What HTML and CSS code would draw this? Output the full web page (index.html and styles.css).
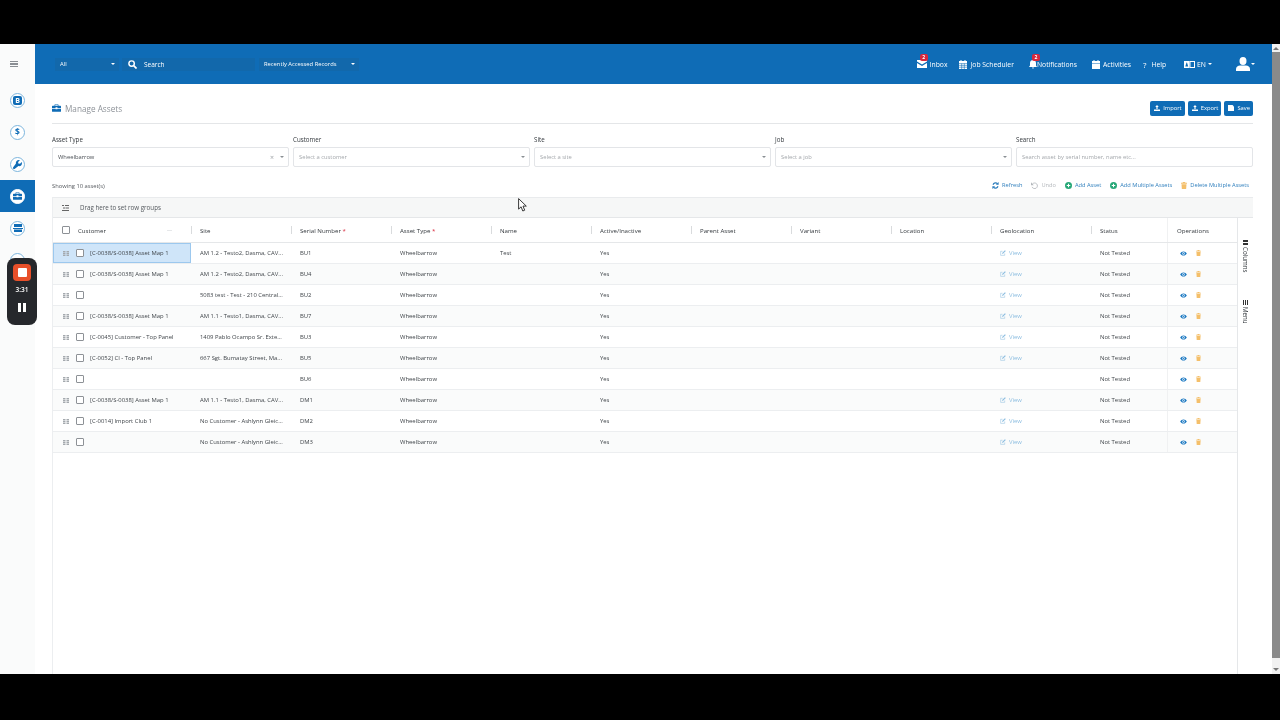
FILE: index.html
```html
<!DOCTYPE html>
<html lang="en">
<head>
<meta charset="utf-8">
<title>Manage Assets</title>
<link rel="stylesheet" href="styles.css">
</head>
<body>
<svg class="defs" width="0" height="0">
  <symbol id="i-eye" viewBox="0 0 16 12"><path fill="currentColor" d="M8 1C4.500 1 1.700 3.200 0 6c1.700 2.800 4.500 5 8 5s6.300-2.200 8-5c-1.700-2.800-4.500-5-8-5zm0 8a3 3 0 1 1 0-6 3 3 0 0 1 0 6z"/><circle cx="8" cy="6" r="1.500" fill="currentColor"/></symbol>
  <symbol id="i-trash" viewBox="0 0 12 14"><path fill="currentColor" d="M4 0h4l1 1.500h3V3.500H0V1.500h3zM1 4.500h10L10.300 14H1.700z"/></symbol>
  <symbol id="i-edit" viewBox="0 0 14 14"><path fill="none" stroke="currentColor" stroke-width="1.200" d="M11 8v4.500H1.500V3H6"/><path fill="currentColor" d="M5 7l6.500-6.500 2 2L7 9H5z"/></symbol>
  <symbol id="i-plus" viewBox="0 0 14 14"><circle cx="7" cy="7" r="7" fill="currentColor"/><path stroke="#fff" stroke-width="2" d="M3.500 7h7M7 3.500v7"/></symbol>
  <symbol id="i-grip" viewBox="0 0 6 5"><path fill="#a4a9ae" d="M0 0h2.500v1.500H0zM3.500 0H6v1.500H3.500zM0 2h2.500v1.200H0zM3.500 2H6v1.200H3.500zM0 3.700h2.500V5H0zM3.500 3.700H6V5H3.500z"/></symbol>
  <symbol id="i-case" viewBox="0 0 14 12"><path fill="currentColor" d="M5 0h4a1 1 0 0 1 1 1v1.500h3a1 1 0 0 1 1 1V6H8.500V5h-3v1H0V3.500a1 1 0 0 1 1-1h3V1a1 1 0 0 1 1-1zm0 1v1.500h4V1zM0 7h5.500v1h3V7H14v4a1 1 0 0 1-1 1H1a1 1 0 0 1-1-1z"/></symbol>
  <symbol id="i-up" viewBox="0 0 12 12"><path fill="currentColor" d="M6 0l3.500 4H7.200v4H4.800V4H2.500zM0 9h12v3H0z"/></symbol>
</svg>

<div class="frame">
  <aside class="rail">
    <button class="rail-menu" aria-label="Menu"><span></span><span></span><span></span></button>
    <div class="rail-item"><span class="rail-ring"><svg width="9" height="9" viewBox="0 0 9 9"><rect width="9" height="9" rx="2" fill="#0f6cb6"/><text x="4.500" y="7.200" class="rail-letter">B</text></svg></span></div>
    <div class="rail-item"><span class="rail-ring rail-dollar">$</span></div>
    <div class="rail-item"><span class="rail-ring"><svg width="9" height="9" viewBox="0 0 10 10"><path fill="#0f6cb6" d="M9.700 2.300L7.800 4.200 5.900 3.900 5.700 2.100 7.600.3C6.300-.2 4.900.1 4 1c-.8.800-1 2-.7 3L.4 7.900c-.5.500-.5 1.200 0 1.700s1.200.5 1.700 0L6 6.700c1 .3 2.200.1 3-.7.900-.9 1.200-2.400.7-3.700z"/></svg></span></div>
    <div class="rail-item rail-active"><span class="rail-ring rail-ring-solid"><svg width="9" height="8" class="ic-blue"><use href="#i-case"/></svg></span></div>
    <div class="rail-item"><span class="rail-ring"><svg width="10" height="8" viewBox="0 0 10 8"><path fill="#0f6cb6" d="M1 0h8v3H1zM0 4h10v1H0zM1 5.500h8V8H1z"/></svg></span></div>
    <div class="rail-item"><span class="rail-ring"></span></div>
    <div class="rail-item"><span class="rail-ring"></span></div>
  </aside>

  <div class="app">
    <header class="topbar">
      <div class="top-left">
        <div class="top-select top-all"><span>All</span><i class="caret caret-w"></i></div>
        <div class="top-search">
          <svg width="9" height="9" viewBox="0 0 10 10"><circle cx="4" cy="4" r="3" fill="none" stroke="#fff" stroke-width="1.600"/><path stroke="#fff" stroke-width="1.800" d="M6.300 6.300L9.500 9.500"/></svg>
          <span>Search</span>
        </div>
        <div class="top-select top-recent"><span>Recently Accessed Records</span><i class="caret caret-w"></i></div>
      </div>
      <nav class="top-nav">
        <a class="nav-link nav-inbox"><span class="nav-ic"><svg width="10" height="8" viewBox="0 0 10 8"><path fill="#fff" d="M0 0h10v1.500L5 4.500 0 1.500zM0 3l5 3 5-3v5H0z"/></svg><b class="badge">2</b></span>Inbox</a>
        <a class="nav-link nav-job"><svg width="8" height="9" viewBox="0 0 8 9"><path fill="#fff" d="M0 1h8v2H0zM1.500 0h1v1h-1zM5.500 0h1v1h-1zM0 3.500h8V9H0z"/><path stroke="#0f6cb6" stroke-width=".6" d="M0 5.300h8M0 7.200h8M2.700 3.500V9M5.300 3.500V9"/></svg>Job Scheduler</a>
        <a class="nav-link nav-notify"><span class="nav-ic"><svg width="8" height="9" viewBox="0 0 8 9"><path fill="#fff" d="M4 0c1.700 0 3 1.300 3 3v2.500L8 7H0l1-1.500V3c0-1.700 1.300-3 3-3zM3 7.500h2L4 9z"/></svg><b class="badge">2</b></span>Notifications</a>
        <a class="nav-link nav-act"><svg width="8" height="9" viewBox="0 0 8 9"><path fill="#fff" d="M0 1h8v2H0zM1.500 0h1v1h-1zM5.500 0h1v1h-1zM0 3.600h8V9H0z"/></svg>Activities</a>
        <a class="nav-link nav-help"><span class="nav-q">?</span>Help</a>
        <a class="nav-link nav-lang"><svg width="11" height="7" viewBox="0 0 11 7"><rect width="5.500" height="7" fill="#fff"/><rect x="6" y=".5" width="4.500" height="6" fill="none" stroke="#fff"/><path fill="#0f6cb6" d="M1.300 5.500L2.500 1.500h.5l1.200 4z"/></svg>EN<i class="caret caret-w"></i></a>
        <a class="nav-user"><svg width="14" height="14" viewBox="0 0 14 14"><ellipse cx="7" cy="4" rx="3.500" ry="4" fill="#fff"/><path fill="#fff" d="M0 14v-2c0-2 2-3.500 4-3.500h6c2 0 4 1.500 4 3.500v2z"/></svg><i class="caret caret-w"></i></a>
      </nav>
    </header>

    <main class="content">
      <div class="page-head">
        <h1 class="page-title"><svg width="9" height="8" class="ic-blue"><use href="#i-case"/></svg>Manage Assets</h1>
        <div class="head-btns">
          <button class="btn"><svg width="6" height="6"><use href="#i-up"/></svg>Import</button>
          <button class="btn"><svg width="6" height="6"><use href="#i-up"/></svg>Export</button>
          <button class="btn btn-save"><svg width="6" height="6" viewBox="0 0 6 6"><path fill="currentColor" d="M0 0h4.500L6 1.500V6H0z"/></svg>Save</button>
        </div>
      </div>

      <div class="filters">
        <label class="filter"><span class="filter-label">Asset Type</span><span class="field"><span class="val">Wheelbarrow</span><span class="clear">×</span><i class="caret"></i></span></label>
        <label class="filter"><span class="filter-label">Customer</span><span class="field"><span class="ph">Select a customer</span><i class="caret"></i></span></label>
        <label class="filter"><span class="filter-label">Site</span><span class="field"><span class="ph">Select a site</span><i class="caret"></i></span></label>
        <label class="filter"><span class="filter-label">Job</span><span class="field"><span class="ph">Select a job</span><i class="caret"></i></span></label>
        <label class="filter"><span class="filter-label">Search</span><span class="field"><span class="ph">Search asset by serial number, name etc...</span></span></label>
      </div>

      <div class="toolbar">
        <span class="count">Showing 10 asset(s)</span>
        <div class="actions">
          <a class="act act-blue"><svg width="7" height="7" viewBox="0 0 10 10"><path fill="none" stroke="currentColor" stroke-width="1.800" d="M1.500 4A3.700 3.700 0 0 1 8 2.800M8.500 6A3.700 3.700 0 0 1 2 7.200"/><path fill="currentColor" d="M9.500 0v4h-4zM.5 10V6h4z"/></svg>Refresh</a>
          <a class="act act-muted"><svg width="7" height="7" viewBox="0 0 10 10"><path fill="none" stroke="currentColor" stroke-width="1.200" d="M2 3a4 4 0 1 1-.5 4"/><path fill="currentColor" d="M0 .5v4h4z"/></svg>Undo</a>
          <a class="act act-blue"><svg width="7" height="7" class="ic-green"><use href="#i-plus"/></svg>Add Asset</a>
          <a class="act act-blue"><svg width="7" height="7" class="ic-green"><use href="#i-plus"/></svg>Add Multiple Assets</a>
          <a class="act act-blue"><svg width="6" height="7" class="ic-amber"><use href="#i-trash"/></svg>Delete Multiple Assets</a>
        </div>
      </div>

      <section class="grid">
        <div class="grid-main">
          <div class="groups"><svg width="7" height="6" viewBox="0 0 7 6"><path fill="#666" d="M0 0h2v1H0zM3 0h4v1H3zM1 2.500h2v1H1zM3.500 2.500H7v1H3.500zM0 5h7v1H0z"/></svg><span>Drag here to set row groups</span></div>
          <div class="gh">
            <div class="hc hc-first"><i class="cb"></i><span>Customer</span><i class="sort-hint"></i></div>
            <div class="hc">Site</div>
            <div class="hc">Serial Number <em>*</em></div>
            <div class="hc">Asset Type <em>*</em></div>
            <div class="hc">Name</div>
            <div class="hc">Active/Inactive</div>
            <div class="hc">Parent Asset</div>
            <div class="hc">Variant</div>
            <div class="hc">Location</div>
            <div class="hc">Geolocation</div>
            <div class="hc">Status</div>
            <div class="hc hc-ops">Operations</div>
          </div>

          <div class="gr">
            <div class="c c-first c-sel"><svg class="grip" width="6" height="5"><use href="#i-grip"/></svg><i class="cb"></i><span>[C-0038/S-0038] Asset Map 1</span></div>
            <div class="c">AM 1.2 - Testo2, Dasma, CAV...</div><div class="c">BU1</div><div class="c">Wheelbarrow</div><div class="c">Test</div><div class="c">Yes</div><div class="c"></div><div class="c"></div><div class="c"></div>
            <div class="c c-geo"><svg width="6" height="6"><use href="#i-edit"/></svg>View</div><div class="c">Not Tested</div>
            <div class="c c-ops"><svg width="7" height="5" class="ic-eye"><use href="#i-eye"/></svg><svg width="5" height="6" class="ic-amber"><use href="#i-trash"/></svg></div>
          </div>
          <div class="gr gr-alt">
            <div class="c c-first"><svg class="grip" width="6" height="5"><use href="#i-grip"/></svg><i class="cb"></i><span>[C-0038/S-0038] Asset Map 1</span></div>
            <div class="c">AM 1.2 - Testo2, Dasma, CAV...</div><div class="c">BU4</div><div class="c">Wheelbarrow</div><div class="c"></div><div class="c">Yes</div><div class="c"></div><div class="c"></div><div class="c"></div>
            <div class="c c-geo"><svg width="6" height="6"><use href="#i-edit"/></svg>View</div><div class="c">Not Tested</div>
            <div class="c c-ops"><svg width="7" height="5" class="ic-eye"><use href="#i-eye"/></svg><svg width="5" height="6" class="ic-amber"><use href="#i-trash"/></svg></div>
          </div>
          <div class="gr">
            <div class="c c-first"><svg class="grip" width="6" height="5"><use href="#i-grip"/></svg><i class="cb"></i><span></span></div>
            <div class="c">5083 test - Test - 210 Central...</div><div class="c">BU2</div><div class="c">Wheelbarrow</div><div class="c"></div><div class="c">Yes</div><div class="c"></div><div class="c"></div><div class="c"></div>
            <div class="c c-geo"><svg width="6" height="6"><use href="#i-edit"/></svg>View</div><div class="c">Not Tested</div>
            <div class="c c-ops"><svg width="7" height="5" class="ic-eye"><use href="#i-eye"/></svg><svg width="5" height="6" class="ic-amber"><use href="#i-trash"/></svg></div>
          </div>
          <div class="gr gr-alt">
            <div class="c c-first"><svg class="grip" width="6" height="5"><use href="#i-grip"/></svg><i class="cb"></i><span>[C-0038/S-0038] Asset Map 1</span></div>
            <div class="c">AM 1.1 - Testo1, Dasma, CAV...</div><div class="c">BU7</div><div class="c">Wheelbarrow</div><div class="c"></div><div class="c">Yes</div><div class="c"></div><div class="c"></div><div class="c"></div>
            <div class="c c-geo"><svg width="6" height="6"><use href="#i-edit"/></svg>View</div><div class="c">Not Tested</div>
            <div class="c c-ops"><svg width="7" height="5" class="ic-eye"><use href="#i-eye"/></svg><svg width="5" height="6" class="ic-amber"><use href="#i-trash"/></svg></div>
          </div>
          <div class="gr">
            <div class="c c-first"><svg class="grip" width="6" height="5"><use href="#i-grip"/></svg><i class="cb"></i><span>[C-0045] Customer - Top Panel</span></div>
            <div class="c">1409 Pablo Ocampo Sr. Exte...</div><div class="c">BU3</div><div class="c">Wheelbarrow</div><div class="c"></div><div class="c">Yes</div><div class="c"></div><div class="c"></div><div class="c"></div>
            <div class="c c-geo"><svg width="6" height="6"><use href="#i-edit"/></svg>View</div><div class="c">Not Tested</div>
            <div class="c c-ops"><svg width="7" height="5" class="ic-eye"><use href="#i-eye"/></svg><svg width="5" height="6" class="ic-amber"><use href="#i-trash"/></svg></div>
          </div>
          <div class="gr gr-alt">
            <div class="c c-first"><svg class="grip" width="6" height="5"><use href="#i-grip"/></svg><i class="cb"></i><span>[C-0052] CI - Top Panel</span></div>
            <div class="c">667 Sgt. Bumatay Street, Ma...</div><div class="c">BU5</div><div class="c">Wheelbarrow</div><div class="c"></div><div class="c">Yes</div><div class="c"></div><div class="c"></div><div class="c"></div>
            <div class="c c-geo"><svg width="6" height="6"><use href="#i-edit"/></svg>View</div><div class="c">Not Tested</div>
            <div class="c c-ops"><svg width="7" height="5" class="ic-eye"><use href="#i-eye"/></svg><svg width="5" height="6" class="ic-amber"><use href="#i-trash"/></svg></div>
          </div>
          <div class="gr">
            <div class="c c-first"><svg class="grip" width="6" height="5"><use href="#i-grip"/></svg><i class="cb"></i><span></span></div>
            <div class="c"></div><div class="c">BU6</div><div class="c">Wheelbarrow</div><div class="c"></div><div class="c">Yes</div><div class="c"></div><div class="c"></div><div class="c"></div>
            <div class="c c-geo"></div><div class="c">Not Tested</div>
            <div class="c c-ops"><svg width="7" height="5" class="ic-eye"><use href="#i-eye"/></svg><svg width="5" height="6" class="ic-amber"><use href="#i-trash"/></svg></div>
          </div>
          <div class="gr gr-alt">
            <div class="c c-first"><svg class="grip" width="6" height="5"><use href="#i-grip"/></svg><i class="cb"></i><span>[C-0038/S-0038] Asset Map 1</span></div>
            <div class="c">AM 1.1 - Testo1, Dasma, CAV...</div><div class="c">DM1</div><div class="c">Wheelbarrow</div><div class="c"></div><div class="c">Yes</div><div class="c"></div><div class="c"></div><div class="c"></div>
            <div class="c c-geo"><svg width="6" height="6"><use href="#i-edit"/></svg>View</div><div class="c">Not Tested</div>
            <div class="c c-ops"><svg width="7" height="5" class="ic-eye"><use href="#i-eye"/></svg><svg width="5" height="6" class="ic-amber"><use href="#i-trash"/></svg></div>
          </div>
          <div class="gr">
            <div class="c c-first"><svg class="grip" width="6" height="5"><use href="#i-grip"/></svg><i class="cb"></i><span>[C-0014] Import Club 1</span></div>
            <div class="c">No Customer - Ashlynn Gleic...</div><div class="c">DM2</div><div class="c">Wheelbarrow</div><div class="c"></div><div class="c">Yes</div><div class="c"></div><div class="c"></div><div class="c"></div>
            <div class="c c-geo"><svg width="6" height="6"><use href="#i-edit"/></svg>View</div><div class="c">Not Tested</div>
            <div class="c c-ops"><svg width="7" height="5" class="ic-eye"><use href="#i-eye"/></svg><svg width="5" height="6" class="ic-amber"><use href="#i-trash"/></svg></div>
          </div>
          <div class="gr gr-alt">
            <div class="c c-first"><svg class="grip" width="6" height="5"><use href="#i-grip"/></svg><i class="cb"></i><span></span></div>
            <div class="c">No Customer - Ashlynn Gleic...</div><div class="c">DM3</div><div class="c">Wheelbarrow</div><div class="c"></div><div class="c">Yes</div><div class="c"></div><div class="c"></div><div class="c"></div>
            <div class="c c-geo"><svg width="6" height="6"><use href="#i-edit"/></svg>View</div><div class="c">Not Tested</div>
            <div class="c c-ops"><svg width="7" height="5" class="ic-eye"><use href="#i-eye"/></svg><svg width="5" height="6" class="ic-amber"><use href="#i-trash"/></svg></div>
          </div>
        </div>
        <div class="side-tabs">
          <span class="side-tab side-columns"><svg width="5" height="5" viewBox="0 0 5 5"><path fill="#333" d="M0 0h5v2H0zM0 3h5v2H0z"/></svg>Columns</span>
          <span class="side-tab side-menu"><svg width="5" height="5" viewBox="0 0 5 5"><path fill="#333" d="M0 0h1v5H0zM2 0h1v5H2zM4 0h1v5H4z"/></svg>Menu</span>
        </div>
      </section>
    </main>
  </div>

  <div class="scrollbar">
    <i class="sb-up"></i>
    <div class="sb-track"><div class="sb-thumb"></div></div>
    <i class="sb-down"></i>
  </div>
</div>

<div class="recorder">
  <span class="rec-stop"><i></i></span>
  <span class="rec-time">3:31</span>
  <span class="rec-pause"><i></i><i></i></span>
</div>

<svg class="cursor" width="9" height="14" viewBox="0 0 9 14"><path fill="#fff" stroke="#222" stroke-width=".9" d="M.6.6v10.500l2.500-2.300 1.700 4.200 1.900-.8-1.700-4.100h3.300z"/></svg>
</body>
</html>
```

FILE: styles.css
```css
* { box-sizing: border-box; }
html, body { margin: 0; height: 720px; overflow: hidden; background: #000; }
body { padding: 44px 0 46px; font-family: "Open Sans", "Noto Sans", "Liberation Sans", sans-serif; font-size: 6px; color: #3a3f45; }
.defs { position: absolute; }
svg { display: block; flex: none; }
.frame { display: flex; height: 630px; background: #fff; filter: blur(.4px); }

.rail { width: 35px; flex: none; background: #fafbfb; display: flex; flex-direction: column; overflow: hidden; }
.rail-menu { height: 40px; width: 100%; border: 0; background: transparent; padding: 0 10px; display: flex; flex-direction: column; justify-content: center; gap: 1.500px; }
.rail-menu span { display: block; width: 8px; height: 1.200px; background: #8a8f94; }
.rail-item { height: 32px; display: flex; align-items: center; justify-content: center; flex: none; }
.rail-ring { width: 15px; height: 15px; border-radius: 50%; border: 1.500px solid #7db6de; background: #fff; display: flex; align-items: center; justify-content: center; color: #0f6cb6; }
.rail-dollar { font-size: 8.500px; font-weight: 700; line-height: 1; }
.rail-letter { font-size: 7px; font-weight: 700; fill: #fff; text-anchor: middle; }
.rail-active { background: #0f6cb6; }
.rail-ring-solid { background: #fff; border-color: #fff; }
.ic-blue { color: #0f6cb6; }
.ic-green { color: #28a878; }
.ic-amber { color: #f4bf6a; }
.ic-eye { color: #1a78c2; }

.app { flex: 1; min-width: 0; display: flex; flex-direction: column; }
.topbar { height: 40px; flex: none; background: #0f6cb6; display: flex; align-items: center; justify-content: space-between; padding: 0 17px 0 20px; color: #fff; }
.top-left { display: flex; align-items: center; }
.top-select { height: 13px; background: #1268ab; display: flex; align-items: center; justify-content: space-between; padding: 0 4px 0 5px; font-size: 5.800px; }
.top-all { width: 64px; }
.top-recent { width: 100px; margin-left: 4px; }
.top-search { width: 133px; height: 13px; background: #1268ab; margin-left: 3px; display: flex; align-items: center; gap: 7px; padding-left: 6px; font-size: 6.500px; }
.caret { display: block; width: 0; height: 0; border: 2px solid transparent; border-top: 2.200px solid #8a8f94; border-bottom: 0; flex: none; }
.caret-w { border-top-color: #fff; }
.top-nav { display: flex; align-items: center; font-size: 6.800px; height: 100%; }
.nav-link { display: flex; align-items: center; gap: 3px; white-space: nowrap; }
.nav-ic { position: relative; display: block; }
.badge { position: absolute; left: 3px; top: -6px; width: 8px; height: 7px; border-radius: 2px; background: #d8283c; font-size: 5px; font-weight: 700; line-height: 7px; text-align: center; color: #fff; }
.nav-job { margin-left: 12px; }
.nav-notify { margin-left: 15px; gap: 0; }
.nav-act { margin-left: 15px; }
.nav-help { margin-left: 12px; gap: 5px; }
.nav-q { font-size: 8px; }
.nav-lang { margin-left: 18px; gap: 2px; }
.nav-user { margin-left: 24px; display: flex; align-items: center; gap: 1px; }

.content { flex: 1; min-height: 0; display: flex; flex-direction: column; padding: 16px 19px 0 17px; }
.page-head { height: 24px; flex: none; display: flex; align-items: center; justify-content: space-between; border-bottom: 1px solid #e4e6e8; padding: 0 0 7px; }
.page-title { margin: 0; font-size: 8.200px; font-weight: 400; color: #8d9298; display: flex; align-items: center; gap: 4px; }
.head-btns { display: flex; gap: 3px; }
.btn { height: 15px; border: 0; border-radius: 2px; background: #0f6cb6; color: #fff; font: inherit; font-size: 5.800px; display: flex; align-items: center; gap: 3px; padding: 0 3px 0 4px; }

.filters { display: grid; grid-template-columns: repeat(5, 1fr); gap: 4px; margin-top: 12px; flex: none; }
.filter { display: flex; flex-direction: column; gap: 3px; }
.filter-label { font-size: 6.200px; line-height: 8px; color: #33383d; }
.field { height: 20px; border: 1px solid #e3e5e8; border-radius: 2px; display: flex; align-items: center; padding: 0 4px 0 5px; font-size: 5.800px; }
.val { flex: 1; color: #4a4f55; }
.ph { flex: 1; color: #a3a7ab; }
.clear { color: #a0a4a8; font-size: 7px; margin-right: 6px; }

.toolbar { display: flex; align-items: center; justify-content: space-between; height: 16px; margin-top: 11px; flex: none; padding-right: 4px; }
.count { font-size: 5.800px; color: #55595e; }
.actions { display: flex; align-items: center; gap: 9px; margin-top: -2px; font-size: 5.700px; }
.act { display: flex; align-items: center; gap: 3px; white-space: nowrap; }
.act-blue { color: #2f7fbd; }
.act-muted { color: #b4b8bc; }

.grid { flex: 1; min-height: 0; margin-top: 3px; display: flex; border-left: 1px solid #eceef0; border-top: 1px solid #e9ebed; overflow: hidden; }
.grid-main { width: 1184px; flex: none; }
.groups { height: 20px; margin-right: -16px; background: #f6f7f7; border-bottom: 1px solid #e5e7e9; display: flex; align-items: center; gap: 11px; padding-left: 9px; font-size: 6.200px; color: #53585d; position: relative; }
.gh, .gr { display: grid; grid-template-columns: 138px repeat(9, 100px) 76px 70px; }
.gh { height: 25px; border-bottom: 1px solid #e5e7e9; }
.hc { display: flex; align-items: center; padding-left: 9px; font-size: 6.100px; color: #33383d; white-space: pre; position: relative; }
.hc + .hc::before { content: ""; position: absolute; left: 0; top: 8px; height: 8px; width: 1px; background: #d9dbdd; }
.hc em { color: #d8283c; font-style: normal; }
.hc-first { gap: 8px; }
.sort-hint { display: block; width: 5px; height: 1px; background: #e6e8ea; margin-left: 53px; }
.hc-ops { border-left: 1px solid #f0f1f2; }
.hc-ops::before { display: none; }
.gr { height: 21px; border-bottom: 1px solid #eceef0; }
.gr-alt { background: #fafbfb; }
.c { display: flex; align-items: center; padding-left: 9px; font-size: 5.900px; color: #3f4449; white-space: nowrap; overflow: hidden; }
.c-first { gap: 6px; }
.c-first .cb { margin-left: 1px; }
.grip { margin-left: 1px; }
.c-sel { background: #cfe5f9; box-shadow: inset 0 0 0 1px #9cc8ee; }
.c-geo { color: #8cbde0; gap: 3px; }
.c-ops { gap: 9px; padding-left: 12px; border-left: 1px solid #f0f1f2; }
.cb { display: block; flex: none; width: 8px; height: 8px; border: 1px solid #8d9196; border-radius: 1px; background: #fff; }

.side-tabs { width: 16px; flex: none; border-left: 1px solid #e5e7e9; margin-top: 20px; background: #fff; position: relative; }
.side-tab { position: absolute; left: 3px; writing-mode: vertical-rl; display: flex; align-items: center; gap: 2px; font-size: 6.200px; color: #33383d; line-height: 9px; }
.side-columns { top: 22px; }
.side-menu { top: 82px; }

.scrollbar { width: 8px; flex: none; background: #f1f1f1; display: flex; flex-direction: column; align-items: center; }
.sb-up, .sb-down { display: block; width: 0; height: 0; border: 3px solid transparent; margin: 3px 0 2px; }
.sb-up { border-bottom: 3px solid #777; border-top: 0; }
.sb-down { border-top: 3px solid #777; border-bottom: 0; margin: 2px 0 3px; }
.sb-track { flex: 1; width: 100%; }
.sb-thumb { height: 606px; background: #8a8a8a; }

.recorder { position: absolute; left: 7px; top: 258px; width: 30px; height: 67px; border-radius: 8px; background: #26282c; display: flex; flex-direction: column; align-items: center; padding-top: 6px; filter: blur(.3px); }
.rec-stop { width: 18px; height: 17px; border-radius: 4px; background: #e8502a; display: flex; align-items: center; justify-content: center; }
.rec-stop i { display: block; width: 9px; height: 9px; background: #fff; border-radius: 1px; }
.rec-time { margin-top: 4px; font-size: 6.500px; line-height: 9px; color: #fff; font-weight: 600; }
.rec-pause { margin-top: 9px; display: flex; gap: 2px; }
.rec-pause i { display: block; width: 3px; height: 9px; background: #fff; }

.cursor { position: absolute; left: 518px; top: 198px; }
```
